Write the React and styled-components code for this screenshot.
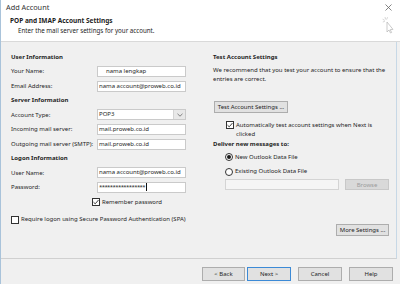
import React from "react";
import styled, { createGlobalStyle } from "styled-components";

const GlobalStyle = createGlobalStyle`
  html, body { margin: 0; padding: 0; background: #f0f0f0; }
  body { font-family: "Noto Sans", "Open Sans", sans-serif; }
`;

const Window = styled.div`
  width: 400px;
  height: 284px;
  box-sizing: border-box;
  border-left: 1px solid #a9c3da;
  background: #f0f0f0;
  display: flex;
  flex-direction: column;
  font-size: 6px;
  color: #1e1e1e;
  white-space: nowrap;
  position: relative;
  overflow: hidden;
`;

const TitleBar = styled.div`
  height: 14px;
  background: #fff;
  display: flex;
  align-items: center;
  justify-content: space-between;
  padding: 0 8px 0 5px;
`;

const Caption = styled.div`
  font-size: 7.3px;
  color: #333;
`;

const Header = styled.div`
  height: 27px;
  background: #fff;
  border-bottom: 1px solid #d9d9d9;
  padding-left: 9px;
  position: relative;
`;

const HeaderTitle = styled.div`
  font-weight: 700;
  font-size: 6.5px;
  line-height: 10px;
  margin-top: 2px;
`;

const HeaderSub = styled.div`
  padding-left: 8px;
  font-size: 6.2px;
  line-height: 10px;
`;

const Cursor = styled.svg`
  position: absolute;
  right: 6px;
  top: 2px;
`;

const Body = styled.div`
  height: 217px;
  margin-right: 3px;
  padding-top: 8px;
  box-sizing: border-box;
  border-bottom: 1px solid #d0d0d0;
  border-right: 1px solid #c7d8e6;
  display: flex;
  align-items: flex-start;
`;

const LeftPane = styled.div`
  margin-left: 10px;
  width: 176px;
  display: flex;
  flex-direction: column;
`;

const RightPane = styled.div`
  margin-left: 26px;
  width: 176px;
  display: flex;
  flex-direction: column;
`;

const Heading = styled.div`
  font-weight: 700;
  height: ${(p) => p.$h || 14}px;
  line-height: ${(p) => p.$h || 14}px;
  margin-top: ${(p) => p.$mt || 0}px;
`;

const Row = styled.div`
  display: grid;
  grid-template-columns: 86px 89px;
  align-items: center;
  height: 14.7px;
`;

const Field = styled.div`
  height: 11px;
  width: ${(p) => p.$w || 89}px;
  box-sizing: border-box;
  border: 1px solid ${(p) => (p.$disabled ? "#d4d4d4" : "#cacaca")};
  background: ${(p) => (p.$disabled ? "#f5f5f5" : "#fff")};
  padding-left: ${(p) => p.$indent || 1}px;
  display: flex;
  align-items: center;
  overflow: hidden;
  line-height: 9px;
`;

const SelectBox = styled(Field)`
  justify-content: space-between;
  padding-right: 0;
`;

const DropButton = styled.div`
  width: 11px;
  height: 100%;
  background: #e8e8e8;
  border-left: 1px solid #d4d4d4;
  display: flex;
  align-items: center;
  justify-content: center;
`;

const Masked = styled.span`
  letter-spacing: -0.6px;
`;

const Caret = styled.span`
  display: inline-block;
  width: 1px;
  height: 8px;
  margin-left: 1px;
  background: #111;
`;

const CheckRow = styled.div`
  display: flex;
  align-items: ${(p) => (p.$top ? "flex-start" : "center")};
  gap: 2px;
  padding-left: ${(p) => p.$indent || 0}px;
  margin-top: ${(p) => p.$mt || 0}px;
  height: ${(p) => (p.$h ? `${p.$h}px` : "auto")};
  line-height: 9px;
`;

const Box = styled.span`
  flex: none;
  width: 8px;
  height: 8px;
  box-sizing: border-box;
  border: 1px solid #333;
  background: #fff;
  display: flex;
  align-items: center;
  justify-content: center;
  margin-top: ${(p) => p.$mt || 0}px;
`;

const RadioDot = styled.span`
  flex: none;
  width: 8px;
  height: 8px;
  box-sizing: border-box;
  border: 1px solid #333;
  border-radius: 50%;
  background: #fff;
  display: flex;
  align-items: center;
  justify-content: center;
  &::after {
    content: "";
    width: 4px;
    height: 4px;
    border-radius: 50%;
    background: ${(p) => (p.$on ? "#1a1a1a" : "transparent")};
  }
`;

const Para = styled.div`
  line-height: 9px;
  margin-top: 1.5px;
`;

const Button = styled.div`
  width: ${(p) => p.$w || 44}px;
  height: ${(p) => p.$h || 12}px;
  box-sizing: border-box;
  border: 1px solid ${(p) => (p.$primary ? "#3c8ad6" : p.$disabled ? "#c8c8c8" : "#adadad")};
  background: ${(p) => (p.$disabled ? "#d9d9d9" : "#e1e1e1")};
  color: ${(p) => (p.$disabled ? "#9c9c9c" : "#1e1e1e")};
  display: flex;
  align-items: center;
  justify-content: center;
  margin-top: ${(p) => p.$mt || 0}px;
  margin-left: ${(p) => p.$ml || 0}px;
  align-self: ${(p) => p.$self || "auto"};
`;

const FileRow = styled.div`
  display: flex;
  padding-left: 12px;
  gap: 6px;
`;

const Footer = styled.div`
  height: 24px;
  display: flex;
  justify-content: flex-end;
  align-items: flex-start;
  padding: 8px 7px 0 0;
  box-sizing: border-box;
`;

const Tick = () => (
  <svg width="7" height="6" viewBox="0 0 7 6">
    <path d="M0.6 3.2 L2.6 5.1 L6.4 0.7" fill="none" stroke="#222" strokeWidth="1" />
  </svg>
);

const Chevron = () => (
  <svg width="6" height="4" viewBox="0 0 6 4">
    <path d="M0.5 0.8 L3 3.2 L5.5 0.8" fill="none" stroke="#666" strokeWidth="0.8" />
  </svg>
);

const CloseIcon = () => (
  <svg width="7" height="7" viewBox="0 0 7 7">
    <path d="M0.5 0.5 L6.5 6.5 M6.5 0.5 L0.5 6.5" stroke="#666" strokeWidth="0.8" />
  </svg>
);

const FormRow = ({ label, children }) => (
  <Row>
    <span>{label}</span>
    {children}
  </Row>
);

export default function App() {
  return (
    <>
      <GlobalStyle />
      <Window>
        <TitleBar>
          <Caption>Add Account</Caption>
          <CloseIcon />
        </TitleBar>
        <Header>
          <HeaderTitle>POP and IMAP Account Settings</HeaderTitle>
          <HeaderSub>Enter the mail server settings for your account.</HeaderSub>
          <Cursor width="12" height="18" viewBox="0 0 12 18">
            <path d="M5 6 L5 16 L7 14 L8.5 17 L9.6 16.5 L8.2 13.6 L11 13.4 Z" fill="#fff" stroke="#b4b4b4" strokeWidth="0.7" />
            <path d="M3 1 L3.6 3.4 M0.6 3.2 L2.8 4.4 M5.6 1.2 L4.6 3.6 M0.8 6 L2.8 5.4" stroke="#c4c4c4" strokeWidth="0.7" />
          </Cursor>
        </Header>
        <Body>
          <LeftPane>
            <Heading>User Information</Heading>
            <FormRow label="Your Name:">
              <Field $indent={8}>nama lengkap</Field>
            </FormRow>
            <FormRow label="Email Address:">
              <Field>nama account@proweb.co.id</Field>
            </FormRow>
            <Heading>Server Information</Heading>
            <FormRow label="Account Type:">
              <SelectBox>
                <span>POP3</span>
                <DropButton>
                  <Chevron />
                </DropButton>
              </SelectBox>
            </FormRow>
            <FormRow label="Incoming mail server:">
              <Field>mail.proweb.co.id</Field>
            </FormRow>
            <FormRow label="Outgoing mail server (SMTP):">
              <Field>mail.proweb.co.id</Field>
            </FormRow>
            <Heading>Logon Information</Heading>
            <FormRow label="User Name:">
              <Field>nama account@proweb.co.id</Field>
            </FormRow>
            <FormRow label="Password:">
              <Field>
                <Masked>*****************</Masked>
                <Caret />
              </Field>
            </FormRow>
            <CheckRow $indent={81} $h={14.7}>
              <Box>
                <Tick />
              </Box>
              <span>Remember password</span>
            </CheckRow>
            <CheckRow $mt={3} $h={14.7}>
              <Box />
              <span>Require logon using Secure Password Authentication (SPA)</span>
            </CheckRow>
          </LeftPane>
          <RightPane>
            <Heading>Test Account Settings</Heading>
            <Para>
              We recommend that you test your account to ensure that the
              <br />
              entries are correct.
            </Para>
            <Button $w={74} $mt={17.5} $ml={1}>
              Test Account Settings ...
            </Button>
            <CheckRow $top $indent={13} $mt={7.5}>
              <Box $mt={0.5}>
                <Tick />
              </Box>
              <span>
                Automatically test account settings when Next is
                <br />
                clicked
              </span>
            </CheckRow>
            <Heading $h={10}>Deliver new messages to:</Heading>
            <CheckRow $indent={12} $mt={1.5} $h={14.5}>
              <RadioDot $on />
              <span>New Outlook Data File</span>
            </CheckRow>
            <CheckRow $indent={12} $h={14.5}>
              <RadioDot />
              <span>Existing Outlook Data File</span>
            </CheckRow>
            <FileRow>
              <Field $w={114} $disabled />
              <Button $w={44} $h={11} $disabled>
                Browse
              </Button>
            </FileRow>
            <Button $w={53} $mt={34} $self="flex-end">
              More Settings ...
            </Button>
          </RightPane>
        </Body>
        <Footer>
          <Button $w={43} $h={14}>&lt; Back</Button>
          <Button $w={44} $h={14} $ml={2} $primary>Next &gt;</Button>
          <Button $w={44} $h={14} $ml={7}>Cancel</Button>
          <Button $w={44} $h={14} $ml={7}>Help</Button>
        </Footer>
      </Window>
    </>
  );
}
